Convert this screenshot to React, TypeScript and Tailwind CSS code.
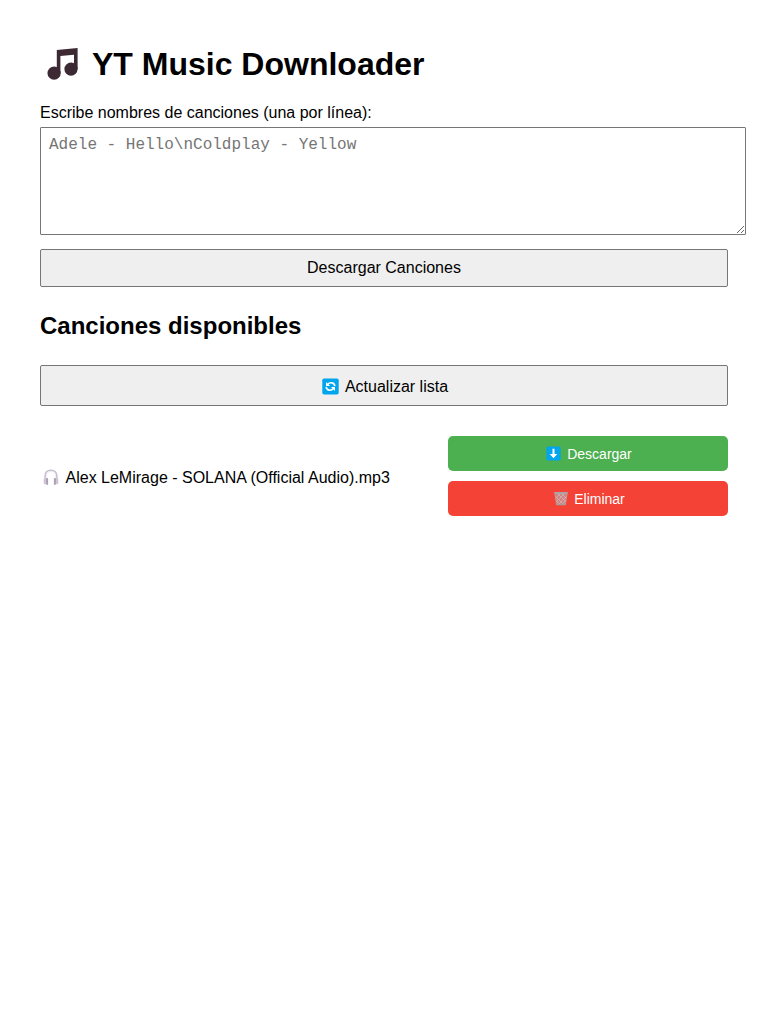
function MusicNotes() {
  return (
    <svg className="mr-[14px] mb-px ml-[6.5px] h-8 w-[31.5px] shrink-0" viewBox="0 0 31.5 32" fill="#3d2933">
      <path d="M9.8 2 30.6 0.1V21H27V6.7L13.4 8V25H9.8z" />
      <circle cx="7.1" cy="25.2" r="6.6" />
      <circle cx="24" cy="21.1" r="6.6" />
    </svg>
  );
}

function Refresh() {
  return (
    <svg className="mt-px mr-[6px] h-[17px] w-[17px]" viewBox="0 0 17 17">
      <rect x="0.3" y="0.4" width="16.4" height="16.2" rx="1.8" fill="#00a6ed" />
      <g fill="none" stroke="#fff" strokeWidth="1.6">
        <path d="M12.8 8.1C12.5 4.6 8 3.6 5.6 6.4" />
        <path d="M4.2 8.9C4.5 12.4 9 13.4 11.4 10.6" />
      </g>
      <path d="M4 4v4h4zM13 13V9H9z" fill="#fff" />
    </svg>
  );
}

function Headphones() {
  return (
    <svg className="ml-[3px] mr-[6.5px] h-[17px] w-4 shrink-0" viewBox="0 0 16 17" fill="none">
      <path d="M2.1 10V7.2C2.1 3.4 4.5 1.2 8 1.2s5.9 2.2 5.9 6V10" stroke="#c5bfd0" strokeWidth="1.6" />
      <path d="M3.3 9V7.2C3.3 4.3 5.2 2.5 8 2.5s4.7 1.8 4.7 4.7V9" stroke="#e6e2eb" strokeWidth="0.6" />
      <rect x="0.7" y="9.3" width="2.7" height="5.9" rx="1.2" fill="#cdc4d6" />
      <rect x="12.6" y="9.3" width="2.7" height="5.9" rx="1.2" fill="#cdc4d6" />
      <rect x="3.1" y="9" width="2" height="6.9" rx="0.8" fill="#a99fb3" />
      <rect x="10.9" y="9" width="2" height="6.9" rx="0.8" fill="#a99fb3" />
    </svg>
  );
}

function DownArrow() {
  return (
    <svg className="mr-[6px] h-[15px] w-[15px]" viewBox="0 0 15 15">
      <rect x="0.4" y="0.4" width="14.2" height="14.2" rx="1.7" fill="#00a6ed" />
      <path d="M6.5 2.8h2v5.2h2.8L7.5 12.3 3.7 8h2.8z" fill="#fff" />
    </svg>
  );
}

function Trash() {
  return (
    <svg className="mr-[6.5px] h-[15px] w-[14px]" viewBox="0 0 14 15" fill="none">
      <path d="M1 2.5h12l-1.7 11.2H2.7z" fill="#d67f7a" />
      <path
        d="m1.5 5.3 7.8 8M2.1 9.5l4 4M3.8 3l7.9 7.7M8 3l4.3 4.5M12.5 5.3l-7.8 8M11.9 9.5l-4 4M10.2 3l-7.9 7.7M6 3 1.7 7.5"
        stroke="#c9bbbd"
        strokeWidth="0.8"
      />
      <path d="M1 2.8 2.6 13.5h8.8L13 2.8" stroke="#b7a8aa" strokeWidth="0.8" />
      <rect x="0.2" y="1" width="13.6" height="2.2" rx="0.7" fill="#b1a3a5" />
      <rect x="2.3" y="12.8" width="9.4" height="1.5" rx="0.6" fill="#a99a9c" />
    </svg>
  );
}

export default function App() {
  return (
    <main className="min-h-screen bg-white px-10 pt-[46px] font-['Liberation_Sans',Arial,sans-serif] text-base leading-[18px] text-black">
      <h1 className="flex h-[37px] items-center text-[32px] leading-[37px] font-bold">
        <MusicNotes />
        YT Music Downloader
      </h1>
      <label htmlFor="songs" className="mt-[21px] block">
        Escribe nombres de canciones (una por línea):
      </label>
      <textarea
        id="songs"
        placeholder={"Adele - Hello\\nColdplay - Yellow"}
        className="mt-[5px] block h-[108px] w-[706px] resize rounded-[1px] border border-[#767676] bg-white p-2 font-['Liberation_Mono','Courier_New',monospace] text-base leading-[18px] placeholder:text-[#757575]"
      />
      <button className="mt-[14px] flex h-[38px] w-full items-center justify-center rounded-[2px] border border-[#767676] bg-[#efefef]">
        Descargar Canciones
      </button>
      <h2 className="mt-[25px] text-2xl leading-[28px] font-bold">Canciones disponibles</h2>
      <button className="mt-[25px] flex h-[41px] w-full items-center justify-center rounded-[2px] border border-[#767676] bg-[#efefef] pl-[2px]">
        <Refresh />
        <span className="pt-[3px]">Actualizar lista</span>
      </button>
      <ul className="mt-[30px]">
        <li className="flex items-center justify-between">
          <span className="flex items-center pt-[3px]">
            <Headphones />
            Alex LeMirage - SOLANA (Official Audio).mp3
          </span>
          <div className="flex w-[280px] flex-col gap-[10px] text-sm text-white">
            <button className="flex h-[35px] items-center justify-center rounded-[5px] bg-[#4caf50] pl-[2px]">
              <DownArrow />
              Descargar
            </button>
            <button className="flex h-[35px] items-center justify-center rounded-[5px] bg-[#f44336] pl-[2.5px]">
              <Trash />
              Eliminar
            </button>
          </div>
        </li>
      </ul>
    </main>
  );
}
